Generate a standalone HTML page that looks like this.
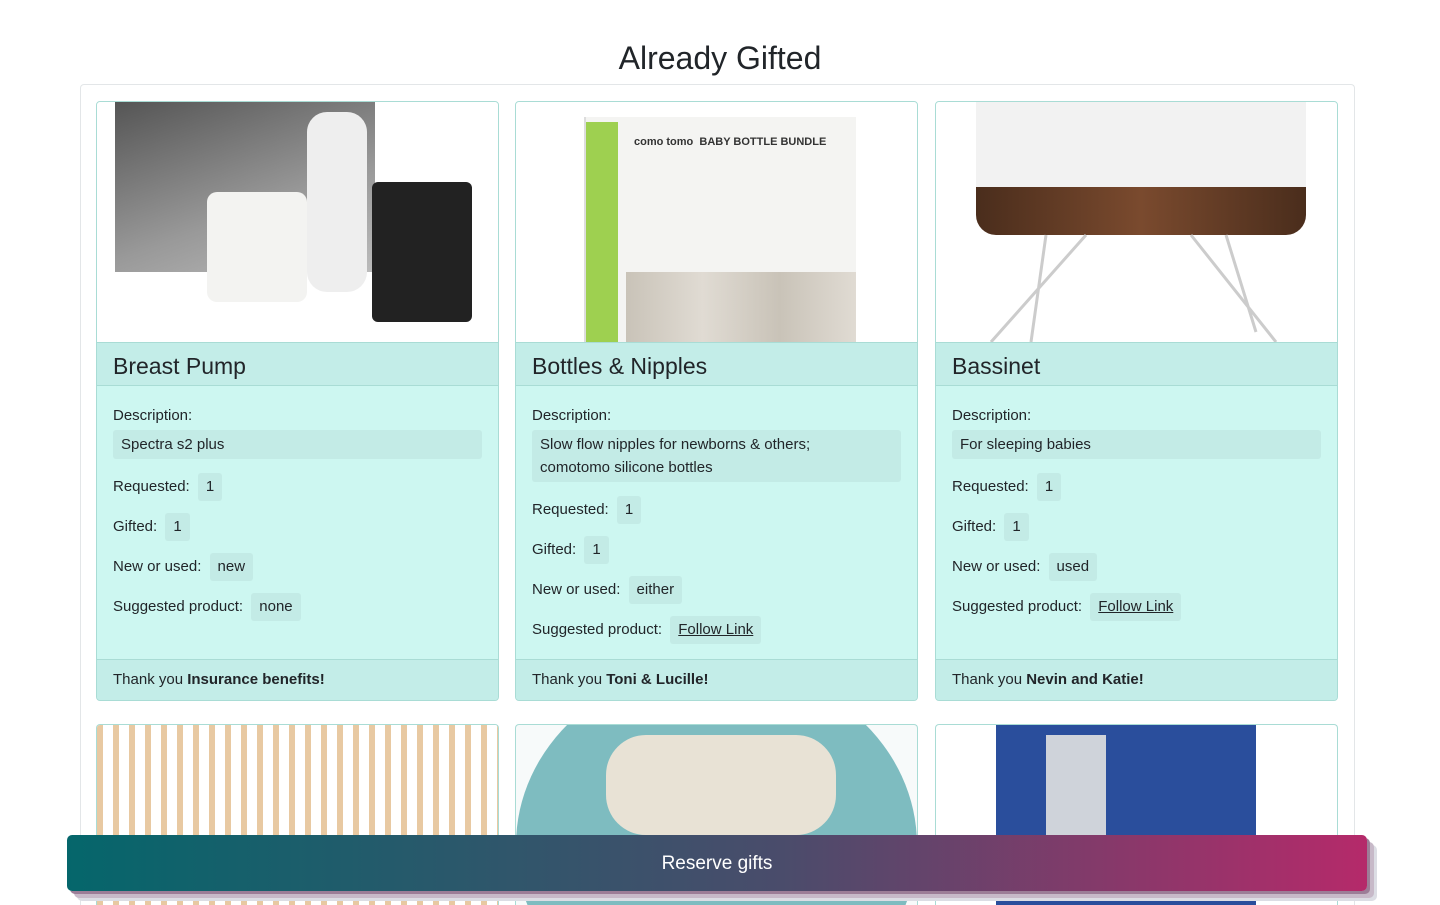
<!DOCTYPE html>
<html style="overflow:hidden"><head><style>
html,body{height:905px}
body{margin:0;width:1440px;overflow:hidden;background:#fff;font-family:"Liberation Sans",sans-serif;color:#212529;position:relative}
h1{position:absolute;top:38px;left:0;width:1440px;text-align:center;margin:0;font-size:32px;font-weight:500;line-height:40px}
.cont{position:absolute;left:80px;top:84px;width:1273px;height:830px;border:1px solid #e3e6e8;border-bottom:none;border-radius:4px 4px 0 0}
.card{position:absolute;width:401px;border:1px solid #a9dcd5;border-radius:4px;background:#cdf7f1;overflow:hidden}
.img{height:240px;background:#fff;position:relative;overflow:hidden}
.hd{height:44px;background:#c3ede8;border-top:1px solid #a9dcd5;border-bottom:1px solid #a9dcd5;font-size:23px;padding-left:16px;line-height:46px;box-sizing:border-box}
.bd{padding:18px 16px 0;font-size:15px;line-height:24px}
.row{margin-bottom:12px}
.tag{display:inline-block;background:#c3ebe6;padding:2px 8px;border-radius:3px;margin-left:4px}
.desc{background:#c3ebe6;padding:3px 8px;border-radius:3px;margin:2px 0 14px;line-height:23px}
.ft{position:absolute;bottom:0;left:0;right:0;height:40px;background:#c3ede8;border-top:1px solid #a9dcd5;font-size:15px;line-height:40px;padding-left:16px}
a{color:#212529}
.btn{position:absolute;left:67px;top:835px;width:1300px;height:56px;border-radius:5px;background:linear-gradient(90deg,#05666b,#4a4c6b 55%,#b52a6a);color:#fff;text-align:center;line-height:58px;font-size:19px;box-shadow:3px 3px 0 #9c7d97,7px 7px 0 #c7b9c8,10px 10px 0 #dcdde4}
</style></head><body>
<h1>Already Gifted</h1>
<div class="cont"></div>

<div class="card" style="left:96px;top:101px;height:598px">
<div class="img"><div style="position:absolute;left:18px;top:0;width:260px;height:170px;background:linear-gradient(160deg,#555,#999 60%,#bbb)"></div><div style="position:absolute;left:110px;top:90px;width:100px;height:110px;background:#f3f3f1;border-radius:10px"></div><div style="position:absolute;left:275px;top:80px;width:100px;height:140px;background:#222;border-radius:6px"></div><div style="position:absolute;left:210px;top:10px;width:60px;height:180px;background:#eee;border-radius:20px"></div></div>
<div class="hd">Breast Pump</div>
<div class="bd"><div>Description:</div><div class="desc">Spectra s2 plus</div>
<div class="row">Requested: <span class="tag">1</span></div>
<div class="row">Gifted: <span class="tag">1</span></div>
<div class="row">New or used: <span class="tag">new</span></div>
<div class="row">Suggested product: <span class="tag">none</span></div></div>
<div class="ft">Thank you <b>Insurance benefits!</b></div></div>

<div class="card" style="left:515px;top:101px;height:598px">
<div class="img"><div style="position:absolute;left:70px;top:15px;width:270px;height:240px;background:#f4f4f2;box-shadow:-2px 0 0 #ddd"></div><div style="position:absolute;left:70px;top:20px;width:32px;height:230px;background:#9ed050"></div><div style="position:absolute;left:118px;top:34px;font-size:11px;font-weight:bold;color:#333">como tomo &nbsp;BABY BOTTLE BUNDLE</div><div style="position:absolute;left:110px;top:170px;width:230px;height:70px;background:linear-gradient(90deg,#c9c3b8,#e0dbd3,#c9c3b8,#e0dbd3)"></div></div>
<div class="hd">Bottles &amp; Nipples</div>
<div class="bd"><div>Description:</div><div class="desc" style="padding-right:30px">Slow flow nipples for newborns &amp; others; comotomo silicone bottles</div>
<div class="row">Requested: <span class="tag">1</span></div>
<div class="row">Gifted: <span class="tag">1</span></div>
<div class="row">New or used: <span class="tag">either</span></div>
<div class="row">Suggested product: <span class="tag"><a href="#">Follow Link</a></span></div></div>
<div class="ft">Thank you <b>Toni &amp; Lucille!</b></div></div>

<div class="card" style="left:935px;top:101px;height:598px">
<div class="img"><div style="position:absolute;left:40px;top:0;width:330px;height:85px;background:#f2f2f2"></div><div style="position:absolute;left:40px;top:85px;width:330px;height:48px;background:linear-gradient(90deg,#4a2d1c,#7a4a2e 50%,#4a2d1c);border-radius:0 0 20px 20px"></div><svg style="position:absolute;left:0;top:0" width="401" height="240"><path d="M150 133 L55 240 M110 133 L95 240 M255 133 L340 240 M290 133 L320 230" stroke="#ccc" stroke-width="3" fill="none"/></svg></div>
<div class="hd">Bassinet</div>
<div class="bd"><div>Description:</div><div class="desc">For sleeping babies</div>
<div class="row">Requested: <span class="tag">1</span></div>
<div class="row">Gifted: <span class="tag">1</span></div>
<div class="row">New or used: <span class="tag">used</span></div>
<div class="row">Suggested product: <span class="tag"><a href="#">Follow Link</a></span></div></div>
<div class="ft">Thank you <b>Nevin and Katie!</b></div></div>

<div class="card" style="left:96px;top:724px;height:180px;border-bottom:none;border-radius:4px 4px 0 0;background:#fff"><div style="height:180px;background:repeating-linear-gradient(90deg,#e8c9a2 0 6px,#fff 6px 16px)"></div></div>
<div class="card" style="left:515px;top:724px;height:180px;border-bottom:none;border-radius:4px 4px 0 0;background:#f7fafa"><div style="position:absolute;left:0;top:-60px;width:401px;height:360px;border-radius:50%;background:#7ebcc0"></div><div style="position:absolute;left:90px;top:10px;width:230px;height:100px;background:#e8e2d5;border-radius:40px"></div></div>
<div class="card" style="left:935px;top:724px;height:180px;border-bottom:none;border-radius:4px 4px 0 0;background:#fff"><div style="position:absolute;left:60px;top:0;width:260px;height:180px;background:#2a4e9c"></div><div style="position:absolute;left:110px;top:10px;width:60px;height:100px;background:#cfd3da"></div></div>

<div class="btn">Reserve gifts</div>
</body></html>
